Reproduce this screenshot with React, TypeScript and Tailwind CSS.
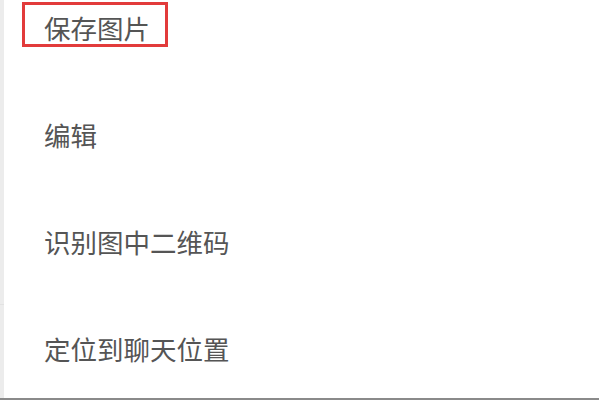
export default function App() {
  const font = { fontFamily: '"Noto Sans CJK SC", "Noto Sans", sans-serif' };
  return (
    <div className="w-[599px] h-[400px] bg-white flex overflow-hidden" style={font}>
      <div className="w-[4px] h-full bg-[#ececec] flex flex-col">
        <div className="h-[304px]" />
        <div className="h-[1px] bg-[#e2e2e2]" />
        <div className="flex-1" />
        <div className="h-[2px] bg-[#8a8a8a]" />
      </div>
      <div className="flex-1 flex flex-col">
        <div className="flex-1 flex flex-col pt-[2px] pl-[18px]">
          <div className="self-start w-[146px] h-[45px] border-[3px] border-[#e23b3b] pl-[19px] pt-[7px] flex items-center text-[26.5px] leading-none text-[#555555]">
            保存图片
          </div>
          <div className="h-[62px]" />
          <div className="h-[45px] pl-[22px] pt-[7px] flex items-center text-[26.5px] leading-none text-[#555555]">编辑</div>
          <div className="h-[62px]" />
          <div className="h-[45px] pl-[22px] pt-[7px] flex items-center text-[26.5px] leading-none text-[#555555]">识别图中二维码</div>
          <div className="h-[62px]" />
          <div className="h-[45px] pl-[22px] pt-[7px] flex items-center text-[26.5px] leading-none text-[#555555]">定位到聊天位置</div>
        </div>
        <div className="h-[2px] bg-[#8a8a8a]" />
      </div>
    </div>
  );
}
